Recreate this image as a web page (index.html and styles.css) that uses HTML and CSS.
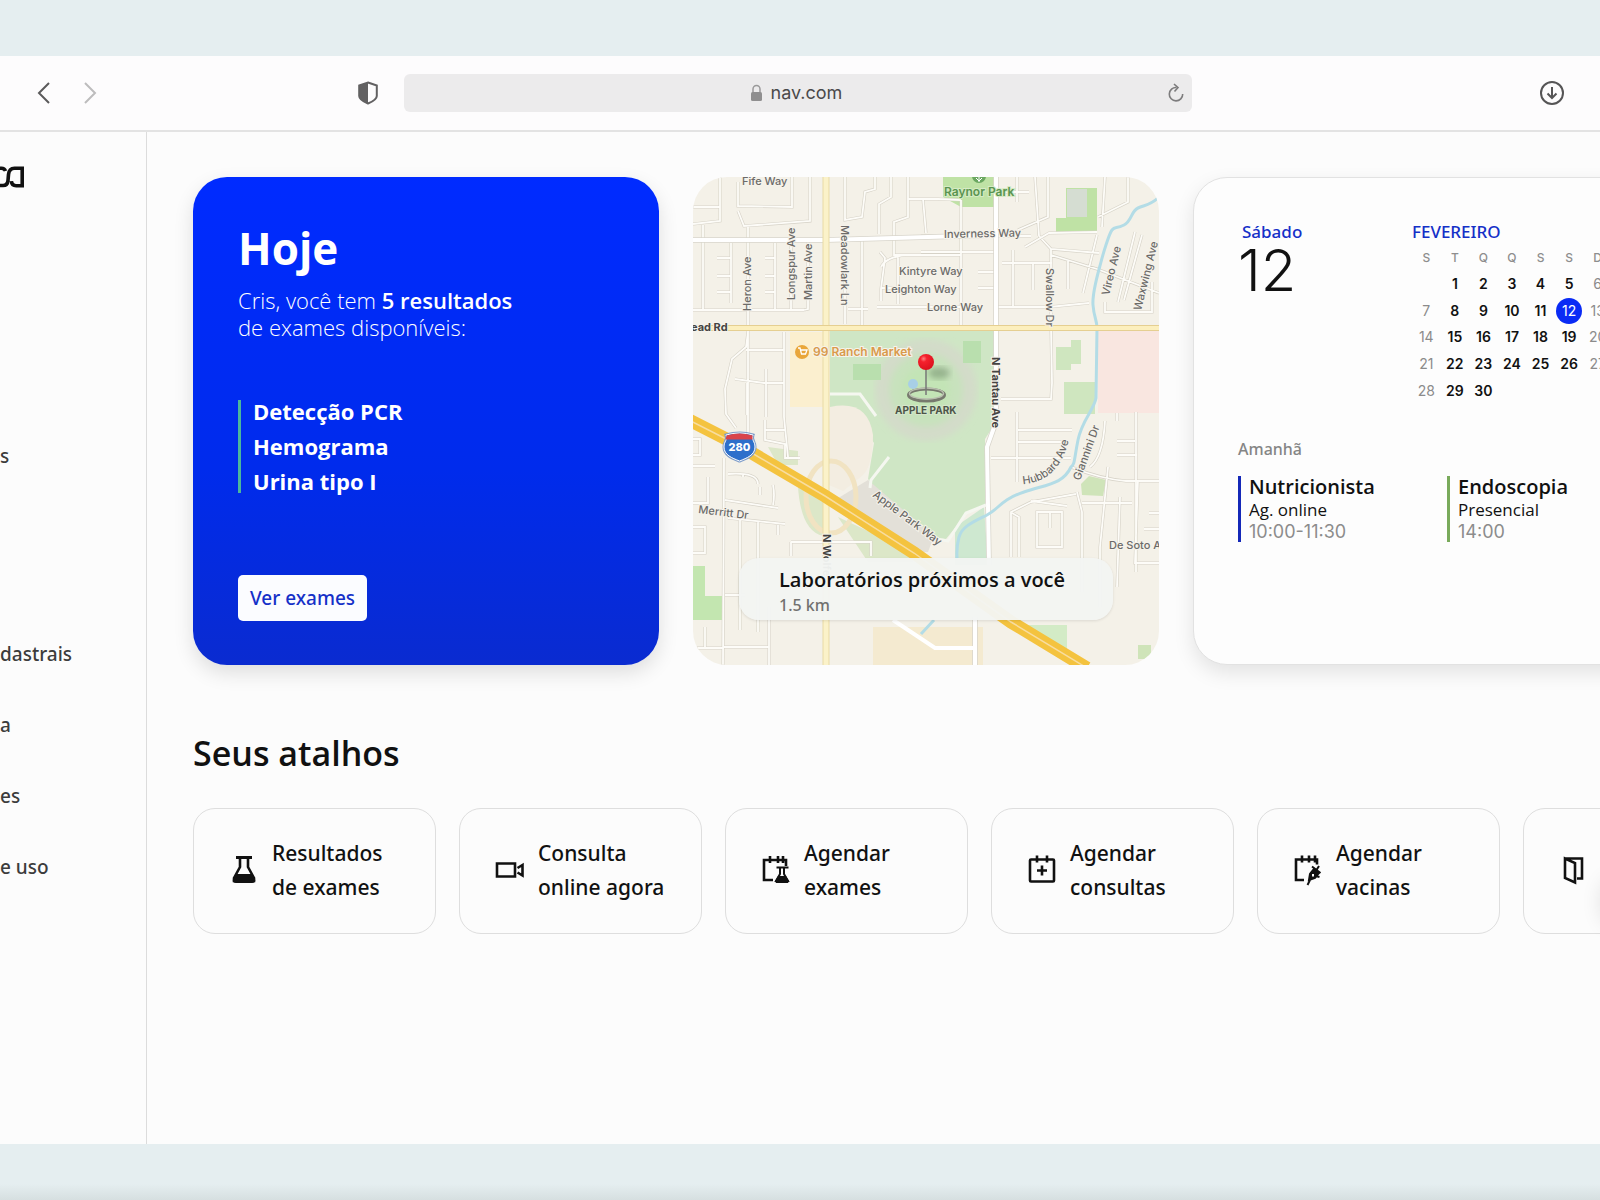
FILE: index.html
```html
<!DOCTYPE html>
<html lang="pt-BR">
<head>
<meta charset="utf-8">
<meta name="viewport" content="width=device-width, initial-scale=1">
<title>nav</title>
<link rel="stylesheet" href="styles.css">
</head>
<body>
<div class="window">
  <header class="toolbar">
    <div class="toolbar-left">
      <button class="icon-button" aria-label="Voltar"><svg width="14" height="24" viewBox="0 0 14 24" fill="none" stroke="#5b5a5b" stroke-width="2"><path d="M12 2 2 12l10 10"/></svg></button>
      <button class="icon-button" aria-label="Avançar"><svg width="14" height="24" viewBox="0 0 14 24" fill="none" stroke="#bdbcbd" stroke-width="2"><path d="m2 2 10 10L2 22"/></svg></button>
      <button class="icon-button shield" aria-label="Privacidade"><svg width="20" height="24" viewBox="0 0 20 24"><path d="M10 1.5 18.800 4.500V15c0 3-4 5.500-8.800 7.500C5.200 20.500 1.200 18 1.200 15V4.500z" fill="none" stroke="#626162" stroke-width="2"/><path d="M10 1.500V22.500C5.200 20.500 1.200 18 1.200 15V4.500z" fill="#626162"/></svg></button>
    </div>
    <form class="address">
      <svg width="13" height="18" viewBox="0 0 13 18"><path d="M3 8V5a3.500 3.500 0 0 1 7 0v3" fill="none" stroke="#9a999a" stroke-width="1.500"/><rect x="1" y="8" width="11" height="9" rx="1.500" fill="#8f8e8f"/></svg>
      <input class="address-input" type="text" value="nav.com" aria-label="Endereço">
      <button class="icon-button reload" type="button" aria-label="Recarregar"><svg width="18" height="20" viewBox="0 0 18 20" fill="none" stroke="#7d7c7d" stroke-width="1.600"><path d="M9.500 4.500A6.700 6.700 0 1 0 15.700 11"/><path d="m7 1 4 3.600L7.500 8.500"/></svg></button>
    </form>
    <div class="toolbar-right">
      <button class="icon-button" aria-label="Downloads"><svg width="26" height="26" viewBox="0 0 26 26" fill="none" stroke="#565556" stroke-width="2"><circle cx="13" cy="13" r="11"/><path d="M13 7v11M8.500 13.500 13 18l4.500-4.500"/></svg></button>
    </div>
  </header>

  <div class="body">
    <nav class="sidebar">
      <svg class="logo" width="25" height="22" viewBox="0 0 25 22" fill="none" stroke="#111" stroke-width="3.600"><path d="M0 2.200h1.500Q4.500 2.200 5.500 5"/><path d="M0 19.500h3q4.500 0 5-5l.5-6q.6-6.300 6-6.300h7.700v17.500h-6q-4.500 0-4.800-4.500"/></svg>
      <a class="side-link side-first" href="#">s</a>
      <a class="side-link" href="#">dastrais</a>
      <a class="side-link" href="#">a</a>
      <a class="side-link" href="#">es</a>
      <a class="side-link" href="#">e uso</a>
    </nav>

    <main class="content">
      <div class="cards">
        <section class="card today">
          <h1 class="today-title">Hoje</h1>
          <p class="today-text">Cris, você tem <strong>5 resultados</strong><br>de exames disponíveis:</p>
          <ul class="results">
            <li>Detecção PCR</li>
            <li>Hemograma</li>
            <li>Urina tipo I</li>
          </ul>
          <button class="see-button">Ver exames</button>
        </section>

        <section class="card map-card">
          <svg class="map" viewBox="0 0 466 488" preserveAspectRatio="xMidYMid slice">
            <defs>
              <filter id="soft"><feGaussianBlur stdDeviation="3"/></filter>
              <radialGradient id="ball" cx=".35" cy=".3" r=".8"><stop offset="0" stop-color="#ff8080"/><stop offset=".25" stop-color="#f5222d"/><stop offset="1" stop-color="#d80f1c"/></radialGradient>
              <path id="streets" d="M27 0v44l-27 3M0 30h27M45 5v24l54 1V0M117 0v44l-66 5-6-15M55 48v230M10 48v85M38 66v60M82 66v66M24 81h14M24 99h14M24 115h14M72 81h10M72 99h10M72 115h10M98 50v82M115 64v68l-4 1M0 133h111M55 155l-2 15-14 12-7 30 1 25 10 14M91 155v85l4 40M53 173h38M42 202l29 4h20M54 206v32M73 192v48M152 0v43l17-3 3-25 10-3V0M198 0v20l-12 7v30M215 0v40l-14 5v34M152 57v90M169 60v90M215 22h30l23 1M230 22l3 34M201 78h67M187 75l5 6-4 31v12M188 111h14M155 132h20M184 130h85M205 77v50M213 78q-20 2-25 12M268 23v125M342 0l4 59M355 0v40l-30 13M346 59l12 13 48 4M332 70l24-14 48-1M228 59h110M228 75h75M285 95h20M285 111h20M320 73v56M309 86h50M340 85v28M358 72v80M304 130l52 0 40-4M358 78l46 14 62 24M375 84v28M404 58l-14 58M412 0l-3 50M435 0v25l-30 15M449 58l-18 65M442 55l-17 70M412 125v10h24M459 105v30h-38M324 0v25M310 15h26M358 151l1 55-1 16h-50M324 235v70M298 281h80M325 253h54M325 265h50M378 290q30 12 55 14h33M424 236v8M443 235v160M412 244q-2 36-15 46M424 278h20M424 264h18M445 303l-3 83h24M456 336h10M451 352h15M415 290l-8 80v60M427 320l-3 90M384 315l5 20v80M389 326h50M326 380v-40l-7-4M344 335h25v35h-25zM357 335v16M338 324l36 5M318 380v-45l20-10 45-8M31 281l-1 207M0 262h7v16H0M0 289h22M15 300v26H0M0 350h12v26H0M35 297q30-2 30 10M32 323l53 8M50 300v-3M35 341l57 6M47 343v110M65 345v110M85 348v10M31 470h45M76 430v58M98 365h80v14M98 365v14M12 450v21M72 243v20l20 4v14h15M92 253h-20M32 418h20M0 471h31M80 308q2 10 0 20M67 310v8"/>
            </defs>
            <rect width="466" height="488" fill="#f4f1e8"/>
            <path d="M97 155h38v75H97z" fill="#fbefcf"/>
            <path d="M180 450h110v38H180z" fill="#f4ead0"/>
            <path d="M405 153h61v83h-61z" fill="#f9e6e0"/>
            <path d="M137 153h164v95l-9 14v66l-18 8-21 26-20-3-30-22-28-35 6-36-12-18-32-12z" fill="#cfe6c5"/>
            <path d="M137 230q38-8 43 28 0 30-10 40l-20 16-14-6z" fill="#f3ede1"/>
            <path d="M175 303l66 56-6 16H222l-80-52z" fill="#e3e0d8"/>
            <path d="M262 350l29-20 4 58h-33z" fill="#cee8d0"/>
            <circle cx="233" cy="213" r="44" fill="#c8e2bd" stroke="#d3dcc9" stroke-width="14" filter="url(#soft)"/>
            <circle cx="233" cy="213" r="24" fill="#c3e4b6" filter="url(#soft)"/>
            <path d="M160 187h28v16h-28zM270 164h18v22h-18z" fill="#b9dfae"/>
            <path d="M250 0h53v30h-35l-18-10zM373 11h31v45h-41V41h10z" fill="#bfe2a5"/>
            <path d="M374 12h20v28h-20z" fill="#d5ddd2"/>
            <path d="M363 170h15v-7h10v24h-10v6h-15zM371 205h31v32h-31z" fill="#cfe6bf"/>
            <path d="M0 389h12v30h19v24H0z" fill="#c3e6b0"/>
            <path d="M388 307l8-8 17 4-3 16-21-1zM445 468h13v14h-13z" fill="#cfe4b9"/>
            <path d="M325 448h49v24l-14-4z" fill="#d3ebc6"/>
            <path d="M75 270l30 4v14H85zM105 310l25 14v35q-22-5-25-49zM145 340l75 35v10h-45z" fill="#dce7c8"/>
            <ellipse cx="138" cy="320" rx="25" ry="36" fill="none" stroke="#f1e3c2" stroke-width="5"/>
            <use href="#streets" fill="none" stroke="#d6d2c7" stroke-width="3"/>
            <use href="#streets" fill="none" stroke="#fdfcf8" stroke-width="1.800"/>
            <g fill="none" stroke="#d8d5cb" stroke-width="5.500"><path d="M0 63h133l170-5M303 0v245l-9 25 2 118M282 440v48"/></g>
            <g fill="none" stroke="#fff" stroke-width="4"><path d="M0 63h133l170-5M303 0v245l-9 25 2 118M282 440v48"/><path d="M200 443l42 28h40"/></g>
            <g fill="none" stroke="#f5f7f0" stroke-width="3"><path d="M137 217h30l16 22M196 280l-18 23-1 8M241 362l14 2 18-28 20-8"/></g>
            <path d="M466 20c-8 8-14 8-21 11s-6 13-14 17-9 1-12 5-9 24-11 32-9 30-8 43 4 15 4 23l-1 70c-2 12-14 22-18 42s-3 24-7 27c-8 17-23 17-47 25s-25 17-37 23-25 11-28 22-2 15-2 22M241 443l-13 14" fill="none" stroke="#b3dce6" stroke-width="3"/>
            <path d="M133 0v488" stroke="#e8dba5" stroke-width="7"/><path d="M133 0v488" stroke="#fbf2c9" stroke-width="5"/>
            <path d="M0 151h466" stroke="#e5cf91" stroke-width="6"/><path d="M0 151h466" stroke="#fcefbd" stroke-width="4"/>
            <path d="M-4 243l51 26 85 50 89 57 97 69 76 46" fill="none" stroke="#f4c33f" stroke-width="13"/>
            <path d="M-4 243l51 26 85 50 89 57 97 69 76 46" fill="none" stroke="#f8dda0" stroke-width="1.500"/>
            <g class="map-label">
              <text x="49" y="8">Fife Way</text>
              <text x="251" y="61" transform="rotate(-1 251 61)">Inverness Way</text>
              <text x="206" y="98">Kintyre Way</text>
              <text x="192" y="116">Leighton Way</text>
              <text x="234" y="134">Lorne Way</text>
              <text transform="translate(58 134) rotate(-90)">Heron Ave</text>
              <text transform="translate(102 123) rotate(-90)">Longspur Ave</text>
              <text transform="translate(119 123) rotate(-90)">Martin Ave</text>
              <text transform="translate(148 48) rotate(90)">Meadowlark Ln</text>
              <text transform="translate(353 91) rotate(90)">Swallow Dr</text>
              <text transform="translate(416 119) rotate(-76)">Vireo Ave</text>
              <text transform="translate(448 134) rotate(-76)">Waxwing Ave</text>
              <text x="5" y="336" transform="rotate(7 5 336)">Merritt Dr</text>
              <text transform="translate(179 319) rotate(37)">Apple Park Way</text>
              <path id="hub" d="M330 307q36-2 46-45" fill="none" stroke="none"/>
              <text><textPath href="#hub">Hubbard Ave</textPath></text>
              <text transform="translate(387 304) rotate(-70)">Giannini Dr</text>
              <text x="416" y="372">De Soto Av</text>
              <g class="map-strong">
                <text x="-2" y="154">ead Rd</text>
                <text transform="translate(299 180) rotate(90)">N Tantau Ave</text>
                <text transform="translate(130 357) rotate(90)">N Wolfe</text>
              </g>
              <text class="map-park" x="251" y="19">Raynor Park</text>
              <text class="map-shop" x="120" y="179">99 Ranch Market</text>
              <text class="map-pin-label" x="202" y="237">APPLE PARK</text>
            </g>
            <circle cx="286" cy="-1" r="7" fill="#6aa760"/><path d="M286 0v5M283 1l3 3 3-3" stroke="#fff" fill="none"/>
            <circle cx="109" cy="175" r="7" fill="#e9a63a"/><path d="M105 171h2l1.500 6h4l1.500-4h-6.500" fill="none" stroke="#fff" stroke-width="1.300"/>
            <circle cx="220" cy="207" r="5" fill="#a8cfe6"/>
            <ellipse cx="246" cy="196" rx="11" ry="6" fill="#688363" opacity=".5" filter="url(#soft)"/>
            <ellipse cx="233.500" cy="218" rx="18" ry="6" fill="none" stroke="#77796e" stroke-width="3"/>
            <ellipse cx="233.500" cy="216.500" rx="17" ry="5.500" fill="none" stroke="#b8bdae" stroke-width="1.500"/>
            <path d="M233 190v28" stroke="#777" stroke-width="1.500"/>
            <circle cx="233" cy="185" r="8" fill="url(#ball)"/>
            <path d="M33 258q14-4 27 0c-2 5 2 6 2 12 0 8-8 11-15.500 14C39 281 31 278 31 270c0-6 4-7 2-12z" fill="#2d6fcb" stroke="#7d9cc9" stroke-width="3"/>
            <path d="M33 258q14-4 27 0c-2 5 2 6 2 12 0 8-8 11-15.500 14C39 281 31 278 31 270c0-6 4-7 2-12z" fill="#2d6fcb" stroke="#fff" stroke-width="1"/>
            <path d="M33.500 258.500q13-4 26 0v4h-27z" fill="#d9434a"/>
            <text class="shield-text" x="46.500" y="274" text-anchor="middle">280</text>
          </svg>
          <div class="map-info">
            <h2 class="map-title">Laboratórios próximos a você</h2>
            <p class="map-distance">1.5 km</p>
          </div>
        </section>

        <section class="card agenda">
          <div class="agenda-top">
            <div>
              <p class="weekday">Sábado</p>
              <p class="day">12</p>
            </div>
            <table class="calendar">
              <caption>FEVEREIRO</caption>
              <thead><tr><th>S</th><th>T</th><th>Q</th><th>Q</th><th>S</th><th>S</th><th>D</th></tr></thead>
              <tbody>
                <tr><td></td><td>1</td><td>2</td><td>3</td><td>4</td><td>5</td><td>6</td></tr>
                <tr><td>7</td><td>8</td><td>9</td><td>10</td><td>11</td><td><span class="current">12</span></td><td>13</td></tr>
                <tr><td>14</td><td>15</td><td>16</td><td>17</td><td>18</td><td>19</td><td>20</td></tr>
                <tr><td>21</td><td>22</td><td>23</td><td>24</td><td>25</td><td>26</td><td>27</td></tr>
                <tr><td>28</td><td>29</td><td>30</td><td></td><td></td><td></td><td></td></tr>
              </tbody>
            </table>
          </div>
          <p class="tomorrow">Amanhã</p>
          <div class="events">
            <article class="event">
              <h3>Nutricionista</h3>
              <p>Ag. online</p>
              <time>10:00-11:30</time>
            </article>
            <article class="event event-green">
              <h3>Endoscopia</h3>
              <p>Presencial</p>
              <time>14:00</time>
            </article>
          </div>
        </section>
      </div>

      <h2 class="section-title">Seus atalhos</h2>
      <div class="shortcuts">
        <a class="shortcut" href="#">
          <svg width="30" height="32" viewBox="0 0 30 32"><path d="M7 3.500h16" stroke="#111" stroke-width="3"/><path d="M11 4v9L5 24v3h20v-3l-6-11V4" fill="none" stroke="#111" stroke-width="2.600"/><path d="M7 20h16l3 5q1 4-3 4H7q-4 0-3-4z" fill="#111"/></svg>
          <span>Resultados<br>de exames</span>
        </a>
        <a class="shortcut" href="#">
          <svg width="30" height="32" viewBox="0 0 30 32" fill="none" stroke="#111" stroke-width="2.600"><path d="M2 9.500h18v13H2zM22.500 14l5-3v10.500l-5-3"/></svg>
          <span>Consulta<br>online agora</span>
        </a>
        <a class="shortcut" href="#">
          <svg width="30" height="32" viewBox="0 0 30 32" fill="none" stroke="#111" stroke-width="2.600"><path d="M12 26H3V6h22v6M9 2v7M17 2v7M22 2v7"/><path d="M15.500 13.500h12M19 14v6l-4 7h12l-4-7v-6" stroke-width="2"/><path d="M17 22h8l3 5-1 2H15l-1-2z" fill="#111" stroke="none"/></svg>
          <span>Agendar<br>exames</span>
        </a>
        <a class="shortcut" href="#">
          <svg width="30" height="32" viewBox="0 0 30 32" fill="none" stroke="#111" stroke-width="2.600"><rect x="3" y="5.500" width="24" height="22" rx="1"/><path d="M10 1.500v7M20 1.500v7M15 11.500v10M10 16.500h10"/></svg>
          <span>Agendar<br>consultas</span>
        </a>
        <a class="shortcut" href="#">
          <svg width="30" height="32" viewBox="0 0 30 32" fill="none" stroke="#111" stroke-width="2.600"><path d="M11 26H3V5.500h21v5M9 1.500v7M16 1.500v7M22 1.500v7"/><path d="m14.500 31 2.500-5" stroke-width="2"/><path d="m16 26 1-6 4-5 5 4-4 5z" fill="#111" stroke-width="2"/><path d="m19 12.500 8.500 6.500M23.500 16l2.500-4M22.500 22l4 1" stroke-width="2"/><path d="M20 20v2.500" stroke="#fff" stroke-width="2"/></svg>
          <span>Agendar<br>vacinas</span>
        </a>
        <a class="shortcut" href="#" aria-label="Guia">
          <svg width="30" height="32" viewBox="0 0 30 32" fill="none" stroke="#111" stroke-width="2.600"><path d="M6 4.500 16 9v19.500L6 24zM6 4.500h17v20h-5"/></svg>
        </a>
      </div>
      <div class="edge-shadow"></div>
    </main>
  </div>
</div>
</body>
</html>
```

FILE: styles.css
```css
:root {
  --brand: "Open Sans", "Noto Sans", sans-serif;
  --brand-medium: "Noto Sans", "Open Sans", sans-serif;
  --system: Inter, "Liberation Sans", sans-serif;
  --blue: #1530c8;
}

* { box-sizing: border-box; }

body {
  margin: 0;
  min-height: 100vh;
  padding: 56px 0;
  display: flex;
  background: linear-gradient(#e5eef0 calc(100% - 16px), #d6dfe0);
  color: #111;
  font-family: var(--brand);
  overflow: hidden;
}

h1, h2, h3, p, ul { margin: 0; padding: 0; }

button { font: inherit; cursor: pointer; }

.window {
  flex: 1;
  min-width: 0;
  display: flex;
  flex-direction: column;
  background: #fcfcfc;
}

/* Browser bar */
.toolbar {
  height: 76px;
  padding: 0 33px 0 35px;
  display: grid;
  grid-template-columns: 369px 1fr 375px;
  align-items: center;
  border-bottom: 2px solid #e3e3e3;
  background: #fdfcfd;
}

.toolbar-left { display: flex; align-items: center; gap: 28px; }
.toolbar-right { display: flex; justify-content: flex-end; }

.icon-button {
  display: flex;
  padding: 0 2px;
  border: 0;
  background: none;
}

.shield { margin-left: auto; margin-right: 24px; }

.address {
  position: relative;
  height: 38px;
  display: flex;
  align-items: center;
  justify-content: center;
  gap: 8px;
  border-radius: 6px;
  background: #ecebec;
}

.address-input {
  width: 76px;
  padding: 0;
  border: 0;
  background: none;
  color: #4a494a;
  font: 18px/24px var(--system);
}

.reload { position: absolute; right: 5px; }

/* Page */
.body { flex: 1; display: flex; min-width: 0; }

.sidebar {
  flex: none;
  width: 147px;
  padding-top: 34px;
  display: flex;
  flex-direction: column;
  border-right: 1px solid #dcdcdc;
}

.logo { margin-bottom: 254px; }

.side-link {
  margin-bottom: 43px;
  color: #3c3c3c;
  font: 500 19px/28px var(--brand-medium);
  text-decoration: none;
}

.side-first { margin-bottom: 170px; }

.content {
  position: relative;
  flex: 1;
  min-width: 0;
  padding: 45px 46px;
  overflow: hidden;
}

.cards {
  display: grid;
  grid-template-columns: repeat(3, minmax(466px, 1fr));
  grid-auto-rows: minmax(488px, auto);
  gap: 34px;
}

.card { border-radius: 34px; }

.today {
  padding: 44px 45px;
  display: flex;
  flex-direction: column;
  align-items: flex-start;
  background: linear-gradient(#002bff, #002bec 60%, #0a2bd0);
  box-shadow: 0 8px 20px rgba(0, 0, 0, .12);
  color: #fff;
}

.today-title { font-size: 44px; line-height: 54px; }

.today-text {
  margin-top: 12px;
  font-size: 22px;
  line-height: 27px;
  font-weight: 300;
}

.today-text strong { font-weight: 600; }

.results {
  margin-top: 59px;
  padding-left: 12px;
  display: grid;
  gap: 12px;
  border-left: 3px solid #4cb79c;
  list-style: none;
  font-size: 22px;
  line-height: 23px;
  font-weight: 700;
}

.see-button {
  height: 46px;
  margin-top: auto;
  padding: 0 12px;
  border: 0;
  border-radius: 5px;
  background: #fbfcff;
  color: var(--blue);
  font: 500 19px/28px var(--brand-medium);
}

.map-card { position: relative; overflow: hidden; }

.map { position: absolute; width: 100%; height: 100%; }

.map-label {
  fill: #6c6b69;
  stroke: #f6f3eb;
  stroke-width: 2px;
  paint-order: stroke;
  font: 500 11px var(--system);
}

.map-strong { fill: #454442; font-weight: 700; }
.map-park { fill: #5a9450; stroke: #d5ebc4; font-size: 12px; font-weight: 600; }
.map-shop { fill: #d99a4c; font-size: 12px; font-weight: 600; }
.map-pin-label { fill: #4d5549; stroke: #d5e6ca; font-size: 10px; font-weight: 700; }
.shield-text { fill: #fff; font: 800 11px var(--system); }

.map-info {
  position: absolute;
  left: 46px;
  right: 46px;
  bottom: 45px;
  padding: 8px 40px 4px;
  border-radius: 20px;
  background: rgba(243, 245, 242, .96);
  box-shadow: 0 1px 3px rgba(0, 0, 0, .1);
}

.map-title { font-size: 20px; line-height: 28px; font-weight: 600; white-space: nowrap; }
.map-distance { color: #71716f; font: 500 16px/22px var(--brand-medium); }

.agenda {
  padding: 40px 44px;
  border: 1px solid #e2e2e2;
  background: #fdfdfd;
  box-shadow: 0 8px 20px rgba(0, 0, 0, .1);
}

.agenda-top { display: flex; align-items: flex-start; justify-content: space-between; }

.weekday { padding-left: 4px; color: var(--blue); font: 500 17px/27px var(--brand-medium); }
.day { font: 300 58px/50px var(--system); }

.calendar {
  height: 159px;
  width: 200px;
  margin-right: 2px;
  border-collapse: collapse;
  table-layout: fixed;
  font: 600 14px/20px var(--system);
  text-align: center;
}

.calendar caption {
  color: var(--blue);
  font: 500 17px/27px var(--brand-medium);
  text-align: left;
}

.calendar th, .calendar td { height: 26px; padding: 0; }
.calendar th { color: #8e8e8e; font-size: 12px; font-weight: 500; }
.calendar td:first-child, .calendar td:last-child { color: #8b8b8b; font-weight: 400; }

.current {
  display: block;
  width: 26px;
  margin: 0 auto;
  border-radius: 50%;
  background: #0a2bf5;
  color: #fff;
  font-weight: 400;
  line-height: 26px;
}

.tomorrow { margin-top: 32px; color: #858585; font: 500 16px/26px var(--brand-medium); }

.events {
  margin-top: 14px;
  display: grid;
  grid-template-columns: 209px 1fr;
}

.event {
  justify-self: start;
  padding-left: 8px;
  border-left: 3px solid #1428b8;
}

.event-green { border-color: #79aa5b; }
.event h3 { font-size: 20px; line-height: 21px; font-weight: 600; }
.event p { font-size: 17px; line-height: 25px; }
.event time { display: block; color: #8c8c8c; font: 18px/20px var(--system); }

.section-title {
  margin: 64px 0 31px;
  font-size: 34px;
  line-height: 48px;
  font-weight: 600;
}

.shortcuts {
  display: grid;
  grid-template-columns: repeat(6, minmax(243px, 1fr));
  gap: 23px;
}

.shortcut {
  min-height: 126px;
  padding: 0 0 2px 35px;
  display: flex;
  align-items: center;
  gap: 13px;
  border: 1px solid #dedede;
  border-radius: 22px;
  color: #111;
  font: 500 21px/34px var(--brand-medium);
  text-decoration: none;
  white-space: nowrap;
}

/* Soft shadow entering from the right edge */
.edge-shadow {
  position: absolute;
  top: 745px;
  right: -30px;
  width: 30px;
  height: 50px;
  border-radius: 50%;
  box-shadow: 0 0 20px rgba(0, 0, 0, .1);
}
```
